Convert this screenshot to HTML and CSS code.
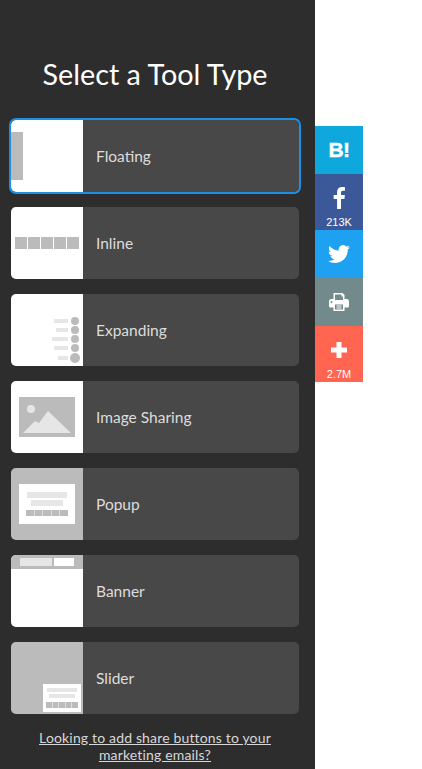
FILE: index.html
```html
<!DOCTYPE html>
<html>
<head>
<meta charset="utf-8">
<title>Select a Tool Type</title>
<link rel="stylesheet" href="styles.css">
</head>
<body>
<div class="page">
	<div class="panel">
		<h1 class="title">Select a Tool Type</h1>
		<div class="tool-list">
			<div class="tool selected">
				<svg class="thumb" viewBox="0 0 72 72">
					<rect class="white" width="72" height="72"/>
					<rect class="grey" y="12" width="12" height="48"/>
				</svg>
				<span class="tool-name">Floating</span>
			</div>
			<div class="tool">
				<svg class="thumb" viewBox="0 0 72 72">
					<rect class="white" width="72" height="72"/>
					<rect class="grey" x="4" y="30" width="12" height="12"/>
					<rect class="grey" x="17" y="30" width="12" height="12"/>
					<rect class="grey" x="30" y="30" width="12" height="12"/>
					<rect class="grey" x="43" y="30" width="12" height="12"/>
					<rect class="grey" x="56" y="30" width="12" height="12"/>
				</svg>
				<span class="tool-name">Inline</span>
			</div>
			<div class="tool">
				<svg class="thumb" viewBox="0 0 72 72">
					<rect class="white" width="72" height="72"/>
					<rect class="light" x="43" y="25" width="14" height="4"/>
					<rect class="light" x="45" y="34" width="12" height="4"/>
					<rect class="light" x="41" y="43" width="16" height="4"/>
					<rect class="light" x="43" y="52" width="14" height="4"/>
					<rect class="light" x="47" y="62" width="10" height="4"/>
					<circle class="grey" cx="64" cy="27" r="4"/>
					<circle class="grey" cx="64" cy="36" r="4"/>
					<circle class="grey" cx="64" cy="45" r="4"/>
					<circle class="grey" cx="64" cy="54" r="4"/>
					<circle class="grey" cx="64" cy="64" r="5"/>
				</svg>
				<span class="tool-name">Expanding</span>
			</div>
			<div class="tool">
				<svg class="thumb" viewBox="0 0 72 72">
					<rect class="white" width="72" height="72"/>
					<rect class="grey" x="8" y="16" width="56" height="40"/>
					<circle class="light" cx="20" cy="28" r="4"/>
					<polygon class="light" points="12,52 24,40 28,42 37,30 60,52"/>
				</svg>
				<span class="tool-name">Image Sharing</span>
			</div>
			<div class="tool">
				<svg class="thumb" viewBox="0 0 72 72">
					<rect class="grey" width="72" height="72"/>
					<rect class="white" x="8" y="16" width="56" height="40"/>
					<rect class="light" x="16" y="24" width="40" height="6"/>
					<rect class="light" x="20" y="32" width="32" height="6"/>
					<rect class="grey" x="15" y="42" width="8" height="6"/>
					<rect class="grey" x="23.5" y="42" width="8" height="6"/>
					<rect class="grey" x="32" y="42" width="8" height="6"/>
					<rect class="grey" x="40.5" y="42" width="8" height="6"/>
					<rect class="grey" x="49" y="42" width="8" height="6"/>
				</svg>
				<span class="tool-name">Popup</span>
			</div>
			<div class="tool">
				<svg class="thumb" viewBox="0 0 72 72">
					<rect class="white" width="72" height="72"/>
					<rect class="grey" width="72" height="14"/>
					<rect class="light" x="9" y="3" width="32" height="8"/>
					<rect class="white" x="43" y="3" width="20" height="8"/>
				</svg>
				<span class="tool-name">Banner</span>
			</div>
			<div class="tool">
				<svg class="thumb" viewBox="0 0 72 72">
					<rect class="grey" width="72" height="72"/>
					<rect class="white" x="32" y="42" width="38" height="28"/>
					<rect class="light" x="36" y="46" width="30" height="4"/>
					<rect class="light" x="38" y="52" width="26" height="4"/>
					<rect class="grey" x="35" y="60" width="6" height="6"/>
					<rect class="grey" x="41.5" y="60" width="6" height="6"/>
					<rect class="grey" x="48" y="60" width="6" height="6"/>
					<rect class="grey" x="54.5" y="60" width="6" height="6"/>
					<rect class="grey" x="61" y="60" width="6" height="6"/>
				</svg>
				<span class="tool-name">Slider</span>
			</div>
		</div>
		<a class="email-link" href="#">Looking to add share buttons to your marketing emails?</a>
	</div>
	<div class="share-bar">
		<div class="share hatena"><span class="hatena-mark">B!</span></div>
		<div class="share facebook has-count">
			<svg class="icon" viewBox="0 0 24 24"><path d="M14.2 24V13.1h3.7l.5-4.3h-4.2V6.100c0-1.200.3-2.100 2.100-2.100h2.200V.2C18.100.1 16.800 0 15.300 0c-3.200 0-5.400 2-5.400 5.600v3.200H6.200v4.300h3.700V24z"/></svg>
			<span class="count">213K</span>
		</div>
		<div class="share twitter">
			<svg class="icon" viewBox="0 0 24 24"><path d="M23.953 4.57a10 10 0 01-2.825.775 4.958 4.958 0 002.163-2.723c-.951.555-2.005.959-3.127 1.184a4.92 4.92 0 00-8.384 4.482C7.69 8.095 4.067 6.13 1.64 3.162a4.822 4.822 0 00-.666 2.475c0 1.71.87 3.213 2.188 4.096a4.904 4.904 0 01-2.228-.616v.06a4.923 4.923 0 003.946 4.827 4.996 4.996 0 01-2.212.085 4.936 4.936 0 004.604 3.417 9.867 9.867 0 01-6.102 2.105c-.39 0-.779-.023-1.17-.067a13.995 13.995 0 007.557 2.209c9.053 0 13.998-7.496 13.998-13.985 0-.21 0-.42-.015-.63A9.935 9.935 0 0024 4.59z"/></svg>
		</div>
		<div class="share print">
			<svg class="icon icon-print" viewBox="0 0 20 18"><path fill-rule="evenodd" d="M4.500 0h9l2 2v4h2a2.500 2.500 0 012.500 2.500V13a1.500 1.500 0 01-1.500 1.500h-3V18h-11v-3.500H1.500A1.500 1.500 0 010 13V8.500A2.500 2.500 0 012.500 6h2zm1.500 1.500V7h8V3.500h-1.500V1.500zM2.500 8a1 1 0 100 2 1 1 0 000-2zM6 11.500v5h8v-5zm1.500 1h5v1h-5zm0 2h5v1h-5z"/></svg>
		</div>
		<div class="share more has-count">
			<svg class="icon icon-plus" viewBox="0 0 16 16"><path d="M5.500 0h5v5.500H16v5h-5.500V16h-5v-5.500H0v-5h5.500z"/></svg>
			<span class="count">2.7M</span>
		</div>
	</div>
</div>
</body>
</html>
```

FILE: styles.css
```css
html, body {
	margin: 0;
	padding: 0;
	background: #fff;
}
.page {
	display: flex;
	align-items: flex-start;
	height: 769px;
	overflow: hidden;
}
.panel {
	width: 315px;
	height: 769px;
	box-sizing: border-box;
	padding: 54px 16px 0 11px;
	background: #2d2d2d;
	font-family: Lato, sans-serif;
}
.title {
	margin: 0 0 25px;
	height: 41px;
	line-height: 41px;
	font-size: 28.8px;
	font-weight: 400;
	color: #fff;
	text-align: center;
	white-space: nowrap;
}
.tool-list {
	display: flex;
	flex-direction: column;
	gap: 15px;
}
.tool {
	display: flex;
	align-items: center;
	height: 72px;
	border-radius: 5px;
	background: #484848;
	overflow: hidden;
}
.tool.selected {
	outline: 2px solid #1a8fe3;
	border-radius: 5px;
}
.thumb {
	display: block;
	flex: none;
	width: 72px;
	height: 72px;
}
.white { fill: #fff; }
.grey { fill: #bbb; }
.light { fill: #e6e6e6; }
.tool-name {
	margin: 0 0 1px 13px;
	font-size: 15.5px;
	color: #ddd;
}
.email-link {
	display: block;
	margin: 15px 12px 0;
	font-size: 14px;
	line-height: 17px;
	letter-spacing: .16px;
	color: #d8d8d8;
	text-align: center;
}
.share-bar {
	flex: none;
	width: 48px;
	margin-top: 126px;
}
.share {
	display: flex;
	flex-direction: column;
	align-items: center;
	justify-content: center;
	height: 48px;
	color: #fff;
}
.share.has-count {
	height: 56px;
	justify-content: flex-start;
	padding-top: 13px;
	box-sizing: border-box;
}
.hatena { background: #0ea8dc; }
.facebook { background: #3b5998; }
.twitter { background: #1fa1f2; }
.print { background: #738a8d; }
.more { background: #ff6550; }
.hatena-mark {
	font-family: "Liberation Sans", sans-serif;
	font-weight: 700;
	font-size: 21px;
	letter-spacing: -.5px;
	-webkit-text-stroke: .4px #fff;
}
.icon {
	display: block;
	width: 22px;
	height: 22px;
	fill: #fff;
}
.icon-print {
	width: 20px;
	height: 18px;
}
.icon-plus {
	width: 16px;
	height: 16px;
	margin-top: 3px;
}
.count {
	margin-top: 7px;
	font-family: "Liberation Sans", sans-serif;
	font-size: 11px;
	line-height: 13px;
}
.more .count {
	margin-top: 10px;
}
```
